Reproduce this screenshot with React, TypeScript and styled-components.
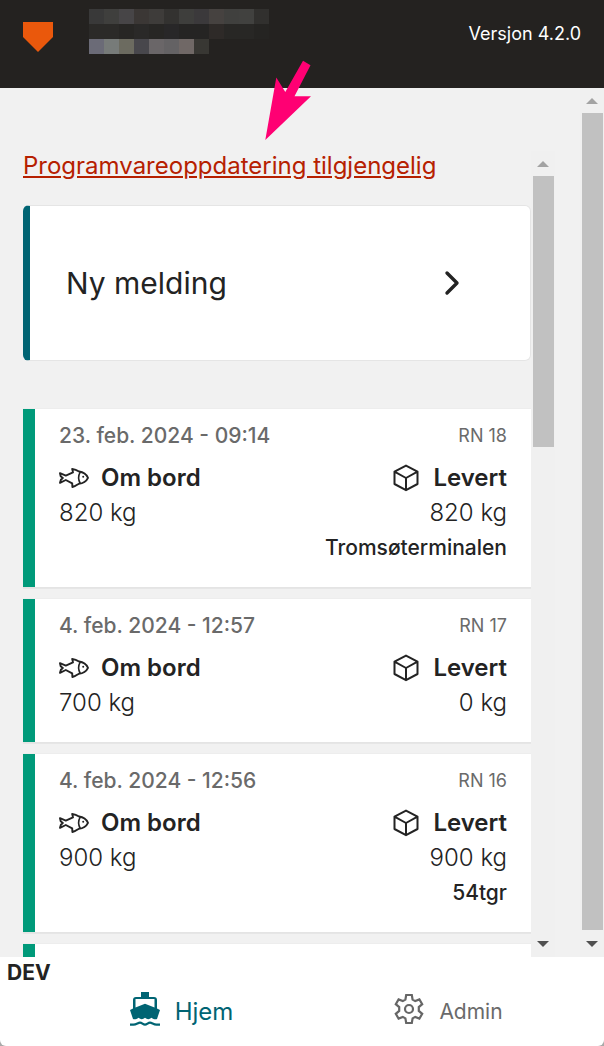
import React from "react";
import styled, { createGlobalStyle } from "styled-components";

const GlobalStyle = createGlobalStyle`
  * { box-sizing: border-box; }
  body {
    margin: 0;
    background: #a9a9a9;
    color: #232323;
    font-family: Inter, "Liberation Sans", sans-serif;
  }
`;

const Shell = styled.div`
  position: relative;
  display: flex;
  flex-direction: column;
  height: 100vh;
  overflow: hidden;
`;

const Header = styled.header`
  display: flex;
  flex: none;
  align-items: flex-start;
  height: 88px;
  padding: 9px 23px 0;
  background: #242220;
  color: #fff;
`;

const Logo = styled.svg`
  display: block;
  margin: 13px 36px 0 0;
`;

const Version = styled.span`
  margin: 10px 0 0 auto;
  font-size: 18px;
  line-height: 30px;
`;

const Pointer = styled.svg`
  position: absolute;
  top: 54px;
  left: 258px;
`;

const Body = styled.div`
  display: flex;
  flex: 1;
  min-height: 0;
  background: #f1f1f1;
`;

const Main = styled.main`
  display: flex;
  flex: 1;
  min-width: 0;
  padding: 63px 25px 0 23px;
`;

const Feed = styled.div`
  flex: 1;
  min-width: 0;
  min-height: 0;
  overflow: hidden;
`;

const UpdateLink = styled.a`
  display: block;
  margin-bottom: 24px;
  color: #b62000;
  font-size: 24px;
  line-height: 30px;
  text-decoration: underline;
  white-space: nowrap;
`;

const NewMessage = styled.button`
  display: flex;
  align-items: center;
  justify-content: space-between;
  width: 100%;
  height: 156px;
  margin-bottom: 48px;
  padding: 0 70px 0 36px;
  border: 1px solid #e5e5e5;
  border-left: 7px solid #006473;
  border-radius: 6px;
  background: #fff;
  color: inherit;
  font-family: inherit;
  font-size: 30px;
`;

const Cards = styled.div`
  display: flex;
  flex-direction: column;
  gap: 12px;
`;

const Card = styled.article`
  padding: 12px 24px 22px;
  border-left: 12px solid #009a7a;
  background: #fff;
  box-shadow: 0 0 1px #d8d8d8, 0 2px 0 #e6e6e6;
`;

const CardHead = styled.div`
  display: flex;
  justify-content: space-between;
  margin-bottom: 9px;
  color: #6a6a6a;
  line-height: 30px;
`;

const DateText = styled.time`
  font-size: 21px;
  font-weight: 500;
`;

const Trip = styled.span`
  font-size: 18px;
`;

const CardBody = styled.div`
  display: flex;
  justify-content: space-between;
`;

const Column = styled.div<{ $end?: boolean }>`
  display: flex;
  flex-direction: column;
  align-items: ${(p) => (p.$end ? "flex-end" : "flex-start")};
  line-height: 35px;
`;

const Title = styled.div<{ $gap: number }>`
  display: flex;
  align-items: center;
  gap: ${(p) => p.$gap}px;
  font-size: 24px;
  font-weight: 600;
`;

const Amount = styled.div`
  font-size: 24px;
  font-weight: 300;
`;

const Place = styled.div`
  font-size: 21px;
  font-weight: 500;
`;

const Bar = styled.div`
  display: flex;
  flex: none;
  flex-direction: column;
  align-items: center;
  width: 24px;
  background: #f0f0f0;
`;

const BarArrow = styled.svg`
  display: block;
  flex: none;
`;

const Track = styled.div`
  flex: 1;
  width: 21px;
`;

const Thumb = styled.div<{ $size: string }>`
  height: ${(p) => p.$size};
  background: #c1c1c1;
`;

const Footer = styled.footer`
  flex: none;
  height: 89px;
  border-radius: 0 0 6px 6px;
  background: #fff;
`;

const Env = styled.div`
  padding: 1px 7px 0;
  font-size: 21px;
  font-weight: 700;
  line-height: 30px;
`;

const Nav = styled.nav`
  display: grid;
  grid-template-columns: 1fr 1fr;
  padding: 4px 22px 0 48px;
`;

const NavLink = styled.a<{ $active?: boolean }>`
  display: flex;
  align-items: center;
  justify-content: center;
  gap: 15px;
  color: ${(p) => (p.$active ? "#006473" : "#6a6a6a")};
  font-size: ${(p) => (p.$active ? 24 : 21)}px;
  line-height: 36px;
  text-decoration: none;

  svg {
    margin-bottom: 5px;
  }
`;

const mosaic = [
  ["#393939", "#3f3f3d", "#474547", "#3b3735", "#3e3c3a", "#333230", "#3e3e3c", "#3b393b", "#464240", "#40403e", "#41413f", "#31302e"],
  ["#2b2a28", "#2b2a28", "#272624", "#2a2928", "#272624", "#282728", "#252423", "#252423", "#2e2a28", "#282725", "#282725", "#252422"],
  ["#6b6b77", "#777b79", "#6c6b60", "#48474c", "#6a6668", "#646264", "#706866", "#383733"],
];

const HiddenName = () => (
  <svg width="180" height="46" shapeRendering="crispEdges" aria-hidden="true">
    {mosaic.map((row, y) =>
      row.map((fill, x) => (
        <rect key={`${x}-${y}`} x={x * 15} y={y * 15} width="15" height="15" fill={fill} />
      ))
    )}
  </svg>
);

const FishIcon = () => (
  <svg width="30" height="20" viewBox="0 0 30 20" fill="none" stroke="#232323" strokeWidth="1.9" strokeLinejoin="round" aria-hidden="true">
    <path d="M1 5.200 6.800 7.600 14 4.400 13.200 1c2.700.3 5 1.300 6.800 2.500 4.300.6 7.500 3 9 6.300-1.600 3.300-5 5.600-9.200 6-1.700.7-2.700 2.400-6.400 3.200l-.2-3.600L6.800 12 1 14.800l.9-3L3.800 10 1.700 8.300Z" />
    <path d="M21.200 4.200c-2 3.500-2 7.600 0 11.200" strokeWidth="1.600" />
    <circle cx="24.200" cy="8.800" r="1" fill="#232323" stroke="none" />
  </svg>
);

const BoxIcon = () => (
  <svg width="26" height="28" viewBox="0 0 26 28" fill="none" stroke="#232323" strokeWidth="2" strokeLinejoin="round" aria-hidden="true">
    <path d="M13 1.600 24.500 7.600v12.400L13 26.200 1.500 20V7.600ZM1.500 7.600 13 14 24.500 7.600M13 14v12" />
  </svg>
);

const ShipIcon = () => (
  <svg width="30" height="34" viewBox="0 0 30 34" fill="#006473" aria-hidden="true">
    <path d="M11 0h8v5h5a3 3 0 0 1 3 3v8.600L30 18l-3 9c-1.600.6-3.400.3-5.500-1.200-2.200 1.900-4.400 1.900-6.500 0-2.100 1.900-4.300 1.900-6.500 0C6.400 27.300 4.600 27.600 3 27L0 18l3-1.400V8a3 3 0 0 1 3-3h5ZM5.500 7v8.400L15 11.800l9.500 3.600V7Z" />
    <path d="M0 32.600h3.500c3 0 4.500-2 6.500-2s3 2 5 2 3-2 5-2 3.500 2 6.500 2H30" fill="none" stroke="#006473" strokeWidth="2.200" />
  </svg>
);

const GearIcon = () => (
  <svg width="30" height="30" viewBox="0 0 30 30" fill="none" stroke="#666" strokeWidth="2.200" aria-hidden="true">
    <path d="M12.200 1h5.600l.8 4.600 2.600 1.500 4.200-1.700 2.800 4.800-3.400 2.900v3.800l3.400 2.900-2.800 4.800-4.200-1.700-2.600 1.500-.8 4.600h-5.600l-.8-4.600-2.600-1.500-4.200 1.700-2.800-4.800 3.400-2.900v-3.800l-3.400-2.900 2.800-4.800 4.200 1.700 2.600-1.500Z" />
    <circle cx="15" cy="15" r="4" />
  </svg>
);

const Scrollbar = ({ size }: { size: string }) => (
  <Bar aria-hidden="true">
    <BarArrow width="24" height="25" viewBox="0 0 24 25">
      <path d="M6 16 12 10l6 6Z" fill="#a3a3a3" />
    </BarArrow>
    <Track>
      <Thumb $size={size} />
    </Track>
    <BarArrow width="24" height="27" viewBox="0 0 24 27">
      <path d="M6 11h12l-6 6Z" fill="#505050" />
    </BarArrow>
  </Bar>
);

type Report = { date: string; trip: string; aboard: string; delivered: string; place?: string };

const reports: Report[] = [
  { date: "23. feb. 2024 - 09:14", trip: "RN 18", aboard: "820 kg", delivered: "820 kg", place: "Tromsøterminalen" },
  { date: "4. feb. 2024 - 12:57", trip: "RN 17", aboard: "700 kg", delivered: "0 kg" },
  { date: "4. feb. 2024 - 12:56", trip: "RN 16", aboard: "900 kg", delivered: "900 kg", place: "54tgr" },
];

const ReportCard = ({ report }: { report: Report }) => (
  <Card>
    <CardHead>
      <DateText>{report.date}</DateText>
      <Trip>{report.trip}</Trip>
    </CardHead>
    <CardBody>
      <Column>
        <Title $gap={12}><FishIcon />Om bord</Title>
        <Amount>{report.aboard}</Amount>
      </Column>
      <Column $end>
        <Title $gap={14}><BoxIcon />Levert</Title>
        <Amount>{report.delivered}</Amount>
        {report.place && <Place>{report.place}</Place>}
      </Column>
    </CardBody>
  </Card>
);

export default function App() {
  return (
    <Shell>
      <GlobalStyle />
      <Header>
        <Logo width="30" height="30" viewBox="0 0 30 30" aria-hidden="true">
          <path d="M0 0h30v15L15 30 0 15Z" fill="#ea580c" />
        </Logo>
        <HiddenName />
        <Version>Versjon 4.2.0</Version>
      </Header>
      <Body>
        <Main>
          <Feed>
            <UpdateLink href="#oppdatering">Programvareoppdatering tilgjengelig</UpdateLink>
            <NewMessage type="button">
              Ny melding
              <svg width="16" height="26" viewBox="0 0 16 26" fill="none" stroke="#232323" strokeWidth="3.400" strokeLinecap="round" strokeLinejoin="round" aria-hidden="true">
                <path d="M3 3 13 13 3 23" />
              </svg>
            </NewMessage>
            <Cards>
              {reports.map((r) => <ReportCard key={r.trip} report={r} />)}
              <Card />
            </Cards>
          </Feed>
          <Scrollbar size="36%" />
        </Main>
        <Scrollbar size="100%" />
      </Body>
      <Footer>
        <Env>DEV</Env>
        <Nav>
          <NavLink href="#hjem" $active><ShipIcon />Hjem</NavLink>
          <NavLink href="#admin"><GearIcon />Admin</NavLink>
        </Nav>
      </Footer>
      <Pointer width="60" height="90" viewBox="0 0 60 90" aria-hidden="true">
        <path d="M7.300 86 18.300 23.500 27.300 38 45 6.800l7.500 4.500L36.500 42.200H53Z" fill="#ff0073" />
      </Pointer>
    </Shell>
  );
}
